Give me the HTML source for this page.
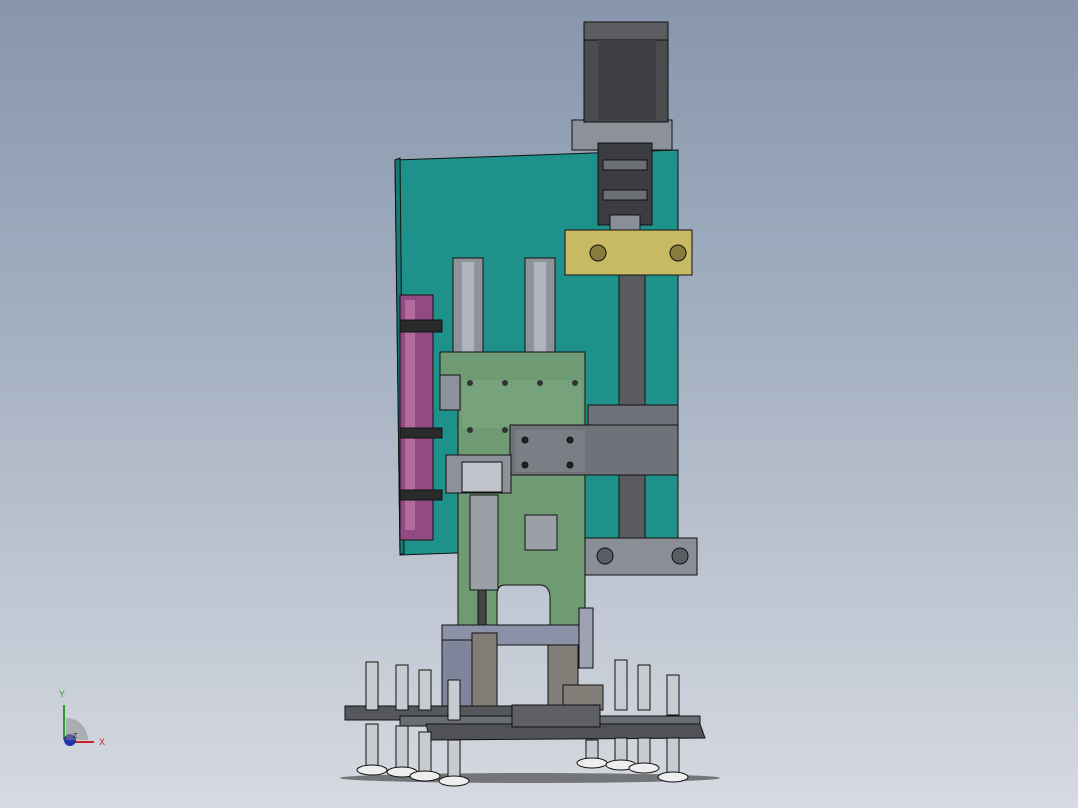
<!DOCTYPE html>
<html><head><style>
html,body{margin:0;padding:0;width:1078px;height:808px;overflow:hidden}
body{background:linear-gradient(#8796ac 0%,#a7b2c3 45%,#d6dae1 100%);font-family:"Liberation Sans",sans-serif}
</style></head><body>
<svg width="1078" height="808" viewBox="0 0 1078 808" xmlns="http://www.w3.org/2000/svg" stroke="#111" stroke-width="1">
<!-- shadow -->
<ellipse cx="530" cy="778" rx="190" ry="5" fill="#333" opacity=".6" stroke="none"/>
<!-- teal plate -->
<path d="M395 160 L678 150 L678 545 L400 555 Z" fill="#1e918a"/>
<path d="M395 160 L400 158 L404 553 L400 555 Z" fill="#177a74"/>
<!-- pink strip -->
<rect x="400" y="295" width="33" height="245" fill="#934a82"/>
<rect x="405" y="300" width="10" height="230" fill="#b36aa0" stroke="none"/>
<rect x="400" y="320" width="42" height="12" fill="#2a2a2a"/>
<rect x="400" y="428" width="42" height="10" fill="#2a2a2a"/>
<rect x="400" y="490" width="42" height="10" fill="#2a2a2a"/>
<!-- motor mount & motor -->
<rect x="572" y="120" width="100" height="30" fill="#8c919a"/>
<rect x="584" y="22" width="84" height="100" fill="#4a4b4e"/>
<rect x="584" y="22" width="84" height="18" fill="#5c5d61"/>
<rect x="598" y="40" width="58" height="80" fill="#3f4043" stroke="none"/>
<!-- coupling -->
<rect x="598" y="143" width="54" height="82" fill="#3c3d42"/>
<rect x="603" y="160" width="44" height="10" fill="#6c6f76"/>
<rect x="603" y="190" width="44" height="10" fill="#6c6f76"/>
<rect x="610" y="215" width="30" height="15" fill="#8a8e96"/>
<!-- yellow block -->
<rect x="565" y="230" width="127" height="45" fill="#c8b964"/>
<circle cx="598" cy="253" r="8" fill="#8a7c3c"/><circle cx="678" cy="253" r="8" fill="#8a7c3c"/>
<!-- screw -->
<rect x="619" y="275" width="26" height="265" fill="#5a5b5e"/>
<!-- rails -->
<rect x="453" y="258" width="30" height="97" fill="#8f939b"/>
<rect x="525" y="258" width="30" height="97" fill="#8f939b"/>
<rect x="462" y="262" width="12" height="90" fill="#b0b4bb" stroke="none"/>
<rect x="534" y="262" width="12" height="90" fill="#b0b4bb" stroke="none"/>
<!-- nut block -->
<rect x="588" y="405" width="90" height="22" fill="#6f7178"/>
<!-- bottom bearing block -->
<rect x="585" y="538" width="112" height="37" fill="#8a8e97"/>
<circle cx="605" cy="556" r="8" fill="#5a5d64"/><circle cx="680" cy="556" r="8" fill="#5a5d64"/>
<!-- green plate -->
<path d="M440 352 L585 352 L585 630 L550 630 L550 595 Q548 585 540 585 L505 585 Q497 585 497 595 L497 630 L458 630 L458 410 L440 410 Z" fill="#6e9a74"/>
<rect x="462" y="380" width="120" height="48" fill="#77a37c" stroke="none"/>
<g fill="#333" stroke="none">
<circle cx="470" cy="383" r="3"/><circle cx="505" cy="383" r="3"/><circle cx="540" cy="383" r="3"/><circle cx="575" cy="383" r="3"/>
<circle cx="470" cy="430" r="3"/><circle cx="505" cy="430" r="3"/><circle cx="575" cy="440" r="3"/>
</g>
<rect x="440" y="375" width="20" height="35" fill="#8d9199"/>
<!-- grey block -->
<rect x="510" y="425" width="168" height="50" fill="#707279"/>
<rect x="515" y="430" width="70" height="42" fill="#7c7e85" stroke="none"/>
<circle cx="525" cy="440" r="3" fill="#222"/><circle cx="570" cy="440" r="3" fill="#222"/><circle cx="525" cy="465" r="3" fill="#222"/><circle cx="570" cy="465" r="3" fill="#222"/>
<!-- small mechanism -->
<rect x="446" y="455" width="65" height="38" fill="#8d9199"/>
<rect x="462" y="462" width="40" height="30" fill="#c0c4ca"/>
<rect x="470" y="495" width="28" height="95" fill="#9aa0a6"/>
<rect x="478" y="590" width="8" height="40" fill="#444"/>
<rect x="525" y="515" width="32" height="35" fill="#9ba0a7"/>
<!-- lower frame -->
<rect x="442" y="625" width="145" height="20" fill="#8b91a6"/>
<rect x="442" y="640" width="30" height="70" fill="#7f859a"/>
<rect x="472" y="633" width="25" height="82" fill="#837d77"/>
<rect x="548" y="645" width="30" height="70" fill="#837d77"/>
<rect x="579" y="608" width="14" height="60" fill="#9da3b3"/>
<rect x="563" y="685" width="40" height="25" fill="#837d77"/>
<!-- base plates -->
<path d="M345 706 L560 706 L560 720 L345 720 Z" fill="#55575c"/>
<path d="M400 716 L700 716 L700 726 L400 726 Z" fill="#6a6d74"/>
<path d="M426 724 L700 724 L705 738 L430 740 Z" fill="#505257"/>
<path d="M512 705 L600 705 L600 727 L512 727 Z" fill="#5e6066"/>
<!-- suction cups -->
<g>
<g transform="translate(372,0)"><rect x="-6" y="662" width="12" height="48" fill="#c8cbd0"/><rect x="-6" y="724" width="12" height="44" fill="#c8cbd0"/><ellipse cx="0" cy="770" rx="15" ry="5" fill="#eee"/></g>
<g transform="translate(402,0)"><rect x="-6" y="665" width="12" height="45" fill="#c8cbd0"/><rect x="-6" y="726" width="12" height="44" fill="#c8cbd0"/><ellipse cx="0" cy="772" rx="15" ry="5" fill="#eee"/></g>
<g transform="translate(425,0)"><rect x="-6" y="670" width="12" height="40" fill="#c8cbd0"/><rect x="-6" y="732" width="12" height="44" fill="#c8cbd0"/><ellipse cx="0" cy="776" rx="15" ry="5" fill="#eee"/></g>
<g transform="translate(454,0)"><rect x="-6" y="680" width="12" height="40" fill="#c8cbd0"/><rect x="-6" y="740" width="12" height="40" fill="#c8cbd0"/><ellipse cx="0" cy="781" rx="15" ry="5" fill="#eee"/></g>
<g transform="translate(592,0)"><rect x="-6" y="740" width="12" height="22" fill="#c8cbd0"/><ellipse cx="0" cy="763" rx="15" ry="5" fill="#eee"/></g>
<g transform="translate(621,0)"><rect x="-6" y="660" width="12" height="50" fill="#c8cbd0"/><rect x="-6" y="738" width="12" height="26" fill="#c8cbd0"/><ellipse cx="0" cy="765" rx="15" ry="5" fill="#eee"/></g>
<g transform="translate(644,0)"><rect x="-6" y="665" width="12" height="45" fill="#c8cbd0"/><rect x="-6" y="738" width="12" height="30" fill="#c8cbd0"/><ellipse cx="0" cy="768" rx="15" ry="5" fill="#eee"/></g>
<g transform="translate(673,0)"><rect x="-6" y="675" width="12" height="40" fill="#c8cbd0"/><rect x="-6" y="738" width="12" height="38" fill="#c8cbd0"/><ellipse cx="0" cy="777" rx="15" ry="5" fill="#eee"/></g>
</g>
<!-- triad -->
<g stroke-width="2">
<line x1="64" y1="740" x2="64" y2="705" stroke="#2a9a2a"/>
<line x1="66" y1="742" x2="94" y2="742" stroke="#cc2222"/>
<circle cx="70" cy="740" r="5" fill="#2233aa" stroke="#2233aa"/>
</g>
<path d="M66 718 A22 22 0 0 1 88 740 L66 740 Z" fill="#888" opacity=".5" stroke="none"/>
<text x="59" y="697" font-size="9" fill="#2a9a2a" stroke="none" font-family="Liberation Sans">Y</text>
<text x="99" y="745" font-size="9" fill="#cc2222" stroke="none" font-family="Liberation Sans">X</text>
<text x="73" y="738" font-size="7" fill="#222" stroke="none" font-family="Liberation Sans">Z</text>
</svg>
</body></html>
